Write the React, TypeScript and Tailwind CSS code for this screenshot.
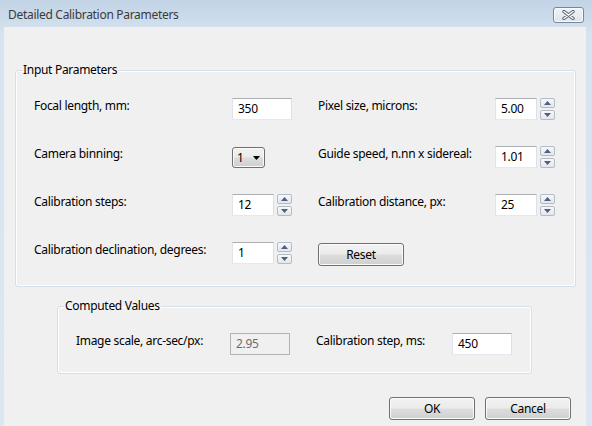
import { ReactNode } from "react";

const btnBg =
  "bg-[linear-gradient(#f2f2f2_0%,#ebebeb_48%,#dddddd_52%,#cfcfcf_100%)] shadow-[inset_0_0_0_1px_#fbfbfb]";

function TextBox({ value, className = "", disabled = false }: { value: string; className?: string; disabled?: boolean }) {
  return (
    <div
      className={
        "h-[22px] flex items-center pl-[5px] border " +
        (disabled
          ? "bg-[#f0f0f0] text-[#6d6d6d] border-[#afb4b9]"
          : "bg-white text-black border-[#e3e9ef] border-t-[#abadb3] border-l-[#e2e3ea] border-r-[#dbdfe6]") +
        " " +
        className
      }
    >
      {value}
    </div>
  );
}

function Arrow({ up }: { up?: boolean }) {
  return (
    <svg width="7" height="4" viewBox="0 0 7 4">
      <polygon points={up ? "3.5,0 7,4 0,4" : "0,0 7,0 3.5,4"} fill="#4d5f84" />
    </svg>
  );
}

function Spin() {
  const half =
    "h-[10px] flex items-center justify-center border border-[#b4bcc8] rounded-[2px] bg-[linear-gradient(#f7f8f9,#e3e6ea)]";
  return (
    <div className="h-[22px] w-[15px] flex flex-col justify-between">
      <div className={half}>
        <Arrow up />
      </div>
      <div className={half}>
        <Arrow />
      </div>
    </div>
  );
}

function SpinBox({ value }: { value: string }) {
  return (
    <div className="flex items-start gap-[3px]">
      <TextBox value={value} className="w-[42px]" />
      <Spin />
    </div>
  );
}

function Label({ children }: { children: ReactNode }) {
  return <div className="leading-[16px] text-black whitespace-nowrap">{children}</div>;
}

function Button({ children, className = "" }: { children: ReactNode; className?: string }) {
  return (
    <div
      className={
        "h-[23px] flex items-center justify-center border border-[#707070] rounded-[3px] text-black " +
        btnBg +
        " " +
        className
      }
    >
      {children}
    </div>
  );
}

function GroupBox({ title, className = "", children }: { title: string; className?: string; children: ReactNode }) {
  return (
    <fieldset
      className={"border border-[#d5dfe5] rounded-[3px] shadow-[inset_0_0_0_1px_#ffffff] " + className}
    >
      <legend className="ml-[6px] px-[1px] leading-[16px] text-black">{title}</legend>
      {children}
    </fieldset>
  );
}

export default function App() {
  return (
    <div
      className="w-[592px] h-[426px] overflow-hidden bg-[linear-gradient(#c1d3e5_0%,#d6e3f0_8%,#dce7f3_100%)] text-[12px] tracking-[-0.3px]"
      style={{ fontFamily: '"Segoe UI", "Noto Sans", sans-serif' }}
    >
      {/* Title bar */}
      <div className="h-[27px] flex items-start">
        <div className="pl-[8px] pt-[7px] leading-[16px] text-[#3a3a3a]">Detailed Calibration Parameters</div>
        <div className="ml-auto mr-[8px] mt-[7px] w-[31px] h-[16px] flex items-center justify-center border border-[#7b8798] rounded-[3px] bg-[linear-gradient(#f1f4f8,#dde4ec)] shadow-[inset_0_0_0_1px_#f8fafc]">
          <svg width="13" height="10" viewBox="0 0 13 10">
            <path d="M2 1.5 L11 8.5 M11 1.5 L2 8.5" stroke="#59626e" strokeWidth="3.4" strokeLinecap="round" />
            <path d="M2 1.5 L11 8.5 M11 1.5 L2 8.5" stroke="#ffffff" strokeWidth="1.5" strokeLinecap="round" />
          </svg>
        </div>
      </div>

      {/* Client area */}
      <div className="ml-[4px] w-[582px] h-[399px] bg-[#f0f0f0] pt-[35px] flex flex-col">
        <GroupBox title="Input Parameters" className="ml-[11px] w-[561px]">
          <div className="pl-[18px] pt-[20px] pb-[22px] grid grid-cols-[198px_86px_177px_1fr] grid-rows-[22px_22px_22px_22px] gap-y-[26px] items-start">
            <Label>Focal length, mm:</Label>
            <TextBox value="350" className="w-[60px]" />
            <Label>Pixel size, microns:</Label>
            <SpinBox value="5.00" />

            <Label>Camera binning:</Label>
            <div
              className={
                "mt-[1px] w-[33px] h-[21px] flex items-center justify-between pl-[4px] pr-[4px] border border-[#707070] rounded-[3px] text-black " +
                btnBg
              }
            >
              <span>1</span>
              <svg width="7" height="4" viewBox="0 0 7 4">
                <polygon points="0,0 7,0 3.5,4" fill="#000000" />
              </svg>
            </div>
            <Label>Guide speed, n.nn x sidereal:</Label>
            <SpinBox value="1.01" />

            <Label>Calibration steps:</Label>
            <SpinBox value="12" />
            <Label>Calibration distance, px:</Label>
            <SpinBox value="25" />

            <Label>Calibration declination, degrees:</Label>
            <SpinBox value="1" />
            <Button className="mt-[1px] w-[86px]">Reset</Button>
            <div />
          </div>
        </GroupBox>

        <GroupBox title="Computed Values" className="mt-[11px] ml-[53px] w-[475px]">
          <div className="pl-[18px] pt-[19px] pb-[18px] flex items-start">
            <div className="w-[154px]">
              <Label>Image scale, arc-sec/px:</Label>
            </div>
            <TextBox value="2.95" disabled className="w-[60px]" />
            <div className="ml-[26px] w-[136px]">
              <Label>Calibration step, ms:</Label>
            </div>
            <TextBox value="450" className="w-[60px]" />
          </div>
        </GroupBox>

        <div className="mt-[23px] pr-[15px] flex justify-end gap-[10px]">
          <Button className="w-[86px]">OK</Button>
          <Button className="w-[86px]">Cancel</Button>
        </div>
      </div>
    </div>
  );
}
